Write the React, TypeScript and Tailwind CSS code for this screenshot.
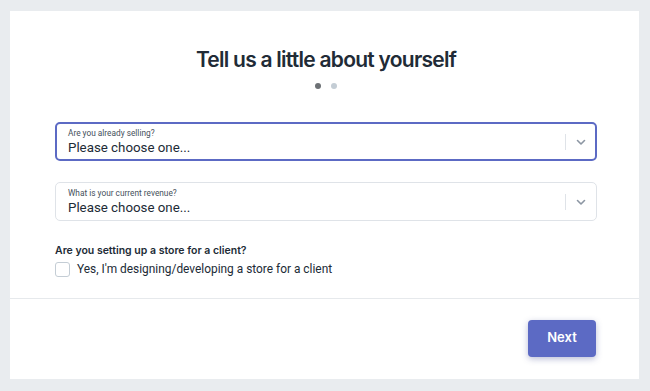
import React from "react";

function Chevron() {
  return (
    <svg width="12" height="12" viewBox="0 0 12 12" fill="none">
      <path d="M2.5 4.5 L6 8 L9.5 4.5" stroke="#8c96a3" strokeWidth="1.6" strokeLinecap="round" strokeLinejoin="round" />
    </svg>
  );
}

function Select({ label, focused }: { label: string; focused?: boolean }) {
  return (
    <div
      className={
        "flex h-[39px] items-center rounded-[5px] bg-white " +
        (focused ? "border-2 border-[#5c6ac4]" : "border border-[#dfe3e8] px-[1px]")
      }
    >
      <div className="flex flex-1 flex-col justify-center pl-[11px] leading-none" style={{ fontFamily: "Roboto, sans-serif" }}>
        <span className="text-[8.3px] text-[#454f5b]">{label}</span>
        <span className="mt-[4px] text-[13.3px] text-[#212b36]">Please choose one...</span>
      </div>
      <div className="h-[16px] w-px bg-[#dfe3e8]" />
      <div className="flex w-[29px] items-center justify-center">
        <Chevron />
      </div>
    </div>
  );
}

export default function App() {
  return (
    <div
      className="h-[391px] w-[650px] bg-[#e9ecef] pl-[10px] pr-[11px] pt-[11px]"
      style={{ fontFamily: "Inter, 'Noto Sans', sans-serif" }}
    >
      <div className="flex h-[368px] flex-col bg-white">
        <div className="flex flex-col pl-[45px] pr-[42px]">
          <h1 className="mt-[35px] text-center text-[21px] font-semibold leading-[28px] tracking-[-0.75px] text-[#212b36]">
            Tell us a little about yourself
          </h1>
          <div className="mt-[9px] flex justify-center gap-[10px]">
            <span className="h-[6px] w-[6px] rounded-full bg-[#6d7175]" />
            <span className="h-[6px] w-[6px] rounded-full bg-[#c4cdd5]" />
          </div>
          <div className="mt-[33px] flex flex-col gap-[21px]">
            <Select label="Are you already selling?" focused />
            <Select label="What is your current revenue?" />
          </div>
          <div className="mt-[22px] text-[10.5px] font-semibold text-[#212b36]">
            Are you setting up a store for a client?
          </div>
          <label className="mt-[2px] flex items-center gap-[7px]">
            <span className="h-[15px] w-[15px] rounded-[3px] border border-[#c4cdd5] bg-white" />
            <span className="text-[11.9px] text-[#212b36]" style={{ fontFamily: "Roboto, sans-serif" }}>
              Yes, I'm designing/developing a store for a client
            </span>
          </label>
        </div>
        <div className="mt-[19px] h-px bg-[#e6e9ec]" />
        <div className="flex justify-end pr-[43px] pt-[21px]">
          <button className="h-[37px] w-[68px] rounded-[4px] bg-[#5c6ac4] text-[13px] font-semibold text-white shadow-[0_2px_6px_rgba(60,70,140,0.35)]">
            Next
          </button>
        </div>
      </div>
    </div>
  );
}
